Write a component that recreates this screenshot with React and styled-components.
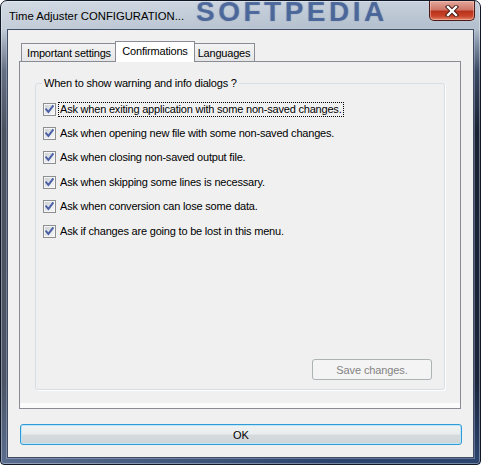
import styled, { createGlobalStyle } from "styled-components";

const GlobalStyle = createGlobalStyle`
  html, body { margin: 0; padding: 0; background: #ffffff; }
  body { font-family: "Liberation Sans", Arial, sans-serif; }
  * { box-sizing: border-box; }
`;

const Window = styled.div`
  position: relative;
  width: 481px;
  height: 465px;
  display: flex;
  flex-direction: column;
  padding: 0 6px 6px 6px;
  border: 1px solid #101827;
  border-radius: 7px 7px 4px 4px;
  overflow: hidden;
  background:
    linear-gradient(to right, rgba(255, 255, 255, 0.22), rgba(255, 255, 255, 0) 70%),
    linear-gradient(
      180deg,
      #c6d0dc 0px,
      #b3bfcd 28px,
      #8593a8 42px,
      #3a4862 70px,
      #192234 130px,
      #1a253b 380px,
      #2c4570 100%
    );
  box-shadow: inset 0 0 0 1px rgba(255, 255, 255, 0.35);
`;

const TitleBar = styled.div`
  position: relative;
  height: 28px;
  display: flex;
  align-items: flex-start;
  justify-content: space-between;
`;

const Title = styled.div`
  margin: 8px 0 0 2px;
  font-size: 11.3px;
  line-height: 14px;
  color: #000;
  white-space: nowrap;
  position: relative;
  z-index: 1;
`;

const Watermark = styled.div`
  position: absolute;
  left: 189px;
  top: 0;
  font-family: "Liberation Sans", Arial, sans-serif;
  font-weight: bold;
  font-size: 28px;
  line-height: 22px;
  letter-spacing: 3.5px;
  color: rgba(45, 85, 155, 0.5);
  text-shadow: 0 0 1px rgba(20, 40, 90, 0.5);
  white-space: nowrap;
`;

const CloseButton = styled.div`
  position: relative;
  z-index: 1;
  width: 46px;
  height: 20px;
  margin-right: -1px;
  display: flex;
  align-items: center;
  justify-content: center;
  border: 1px solid #4a1a14;
  border-top: none;
  border-radius: 0 0 5px 5px;
  background: linear-gradient(
    180deg,
    #e3a79b 0%,
    #d0776a 45%,
    #b9321c 55%,
    #c9452b 80%,
    #e3876a 100%
  );
  box-shadow: inset 0 0 0 1px rgba(255, 210, 200, 0.45);
`;

const Client = styled.div`
  flex: 1;
  display: flex;
  flex-direction: column;
  padding: 11px 12px 12px 11px;
  border: 1px solid #3f4c63;
  background: #f0f0f0;
  box-shadow: 0 0 0 1px rgba(200, 210, 225, 0.35);
`;

const TabRow = styled.div`
  height: 20px;
  display: flex;
  align-items: flex-end;
  padding-left: 2px;
`;

const Tab = styled.div`
  position: relative;
  width: ${(p) => p.$w}px;
  height: ${(p) => (p.$active ? 21 : 18)}px;
  margin: ${(p) => (p.$active ? "0 -2px -1px -2px" : "0")};
  z-index: ${(p) => (p.$active ? 2 : 1)};
  display: flex;
  align-items: center;
  justify-content: center;
  padding-bottom: ${(p) => (p.$active ? 3 : 0)}px;
  border: 1px solid #898c95;
  border-bottom: none;
  background: ${(p) =>
    p.$active ? "#ffffff" : "linear-gradient(180deg, #f3f3f3, #e6e6e6)"};
  font-size: 11px;
  letter-spacing: -0.2px;
  color: #000;
  white-space: nowrap;
`;

const Panel = styled.div`
  position: relative;
  flex: 1;
  display: flex;
  flex-direction: column;
  padding: 15px 15px 18px 15px;
  border: 1px solid #898c95;
  background: #f0f0f0;
  box-shadow: inset 0 -5px 0 #fbfbfb;
`;

const Group = styled.fieldset`
  flex: 1;
  margin: 0;
  display: flex;
  flex-direction: column;
  padding: 7px 12px 9px 7px;
  border: 1px solid #d5dfe5;
  border-radius: 3px;
  box-shadow: 1px 1px 0 #ffffff;
  min-width: 0;
`;

const Legend = styled.legend`
  margin-left: -1px;
  padding: 0 2px;
  font-size: 11px;
  letter-spacing: -0.2px;
  line-height: 13px;
  color: #000;
`;

const CheckList = styled.div`
  display: flex;
  flex-direction: column;
`;

const CheckRow = styled.label`
  height: 24.4px;
  display: flex;
  align-items: center;
  gap: 2px;
  font-size: 11px;
  letter-spacing: -0.2px;
  color: #000;
`;

const Label = styled.span`
  padding: 0 1px;
  line-height: 13px;
  border: 1px dotted ${(p) => (p.$focused ? "#000" : "transparent")};
  white-space: nowrap;
`;

const ButtonRow = styled.div`
  margin-top: auto;
  display: flex;
  justify-content: flex-end;
`;

const SaveButton = styled.div`
  width: 120px;
  height: 21px;
  display: flex;
  align-items: center;
  justify-content: center;
  border: 1px solid #adb2b5;
  border-radius: 3px;
  background: #f4f4f4;
  font-size: 11px;
  letter-spacing: -0.1px;
  color: #838383;
`;

const OkButton = styled.div`
  height: 21px;
  margin: 15px -1px 0 1px;
  display: flex;
  align-items: center;
  justify-content: center;
  border: 1px solid #2e9bd6;
  border-radius: 3px;
  background: linear-gradient(180deg, #f0f3f3 0%, #e9eded 48%, #d6dbde 52%, #cfd4d7 100%);
  box-shadow: inset 0 0 0 1px #bfe6f7;
  font-size: 11px;
  color: #000;
`;

const CheckBox = () => (
  <svg width="13" height="13" viewBox="0 0 13 13">
    <defs>
      <linearGradient id="cbFill" x1="0" y1="0" x2="1" y2="1">
        <stop offset="0" stopColor="#cdd1d6" />
        <stop offset="1" stopColor="#f7f7f7" />
      </linearGradient>
    </defs>
    <rect x="0.5" y="0.5" width="12" height="12" fill="#f6f6f6" stroke="#8e8f8f" />
    <rect x="2" y="2" width="9" height="9" fill="url(#cbFill)" />
    <path
      d="M3.2 6.4 L5.4 8.9 L9.8 3.2"
      fill="none"
      stroke="#4a5fa6"
      strokeWidth="1.9"
      strokeLinecap="square"
    />
  </svg>
);

const CloseIcon = () => (
  <svg width="14" height="12" viewBox="0 0 14 12">
    <path d="M3 2 L11 10 M11 2 L3 10" stroke="#3a1410" strokeWidth="4.2" strokeLinecap="square" />
    <path d="M3 2 L11 10 M11 2 L3 10" stroke="#ffffff" strokeWidth="2.4" strokeLinecap="square" />
  </svg>
);

const options = [
  "Ask when exiting application with some non-saved changes.",
  "Ask when opening new file with some non-saved changes.",
  "Ask when closing non-saved output file.",
  "Ask when skipping some lines is necessary.",
  "Ask when conversion can lose some data.",
  "Ask if changes are going to be lost in this menu.",
];

const tabs = [
  { name: "Important settings", w: 96 },
  { name: "Confirmations", w: 80, active: true },
  { name: "Languages", w: 62 },
];

export default function App() {
  return (
    <>
      <GlobalStyle />
      <Window>
        <TitleBar>
          <Title>Time Adjuster CONFIGURATION...</Title>
          <Watermark>SOFTPEDIA</Watermark>
          <CloseButton>
            <CloseIcon />
          </CloseButton>
        </TitleBar>
        <Client>
          <TabRow>
            {tabs.map((t) => (
              <Tab key={t.name} $w={t.w} $active={t.active}>
                {t.name}
              </Tab>
            ))}
          </TabRow>
          <Panel>
            <Group>
              <Legend>When to show warning and info dialogs ?</Legend>
              <CheckList>
                {options.map((o, i) => (
                  <CheckRow key={o}>
                    <CheckBox />
                    <Label $focused={i === 0}>{o}</Label>
                  </CheckRow>
                ))}
              </CheckList>
              <ButtonRow>
                <SaveButton>Save changes.</SaveButton>
              </ButtonRow>
            </Group>
          </Panel>
          <OkButton>OK</OkButton>
        </Client>
      </Window>
    </>
  );
}
